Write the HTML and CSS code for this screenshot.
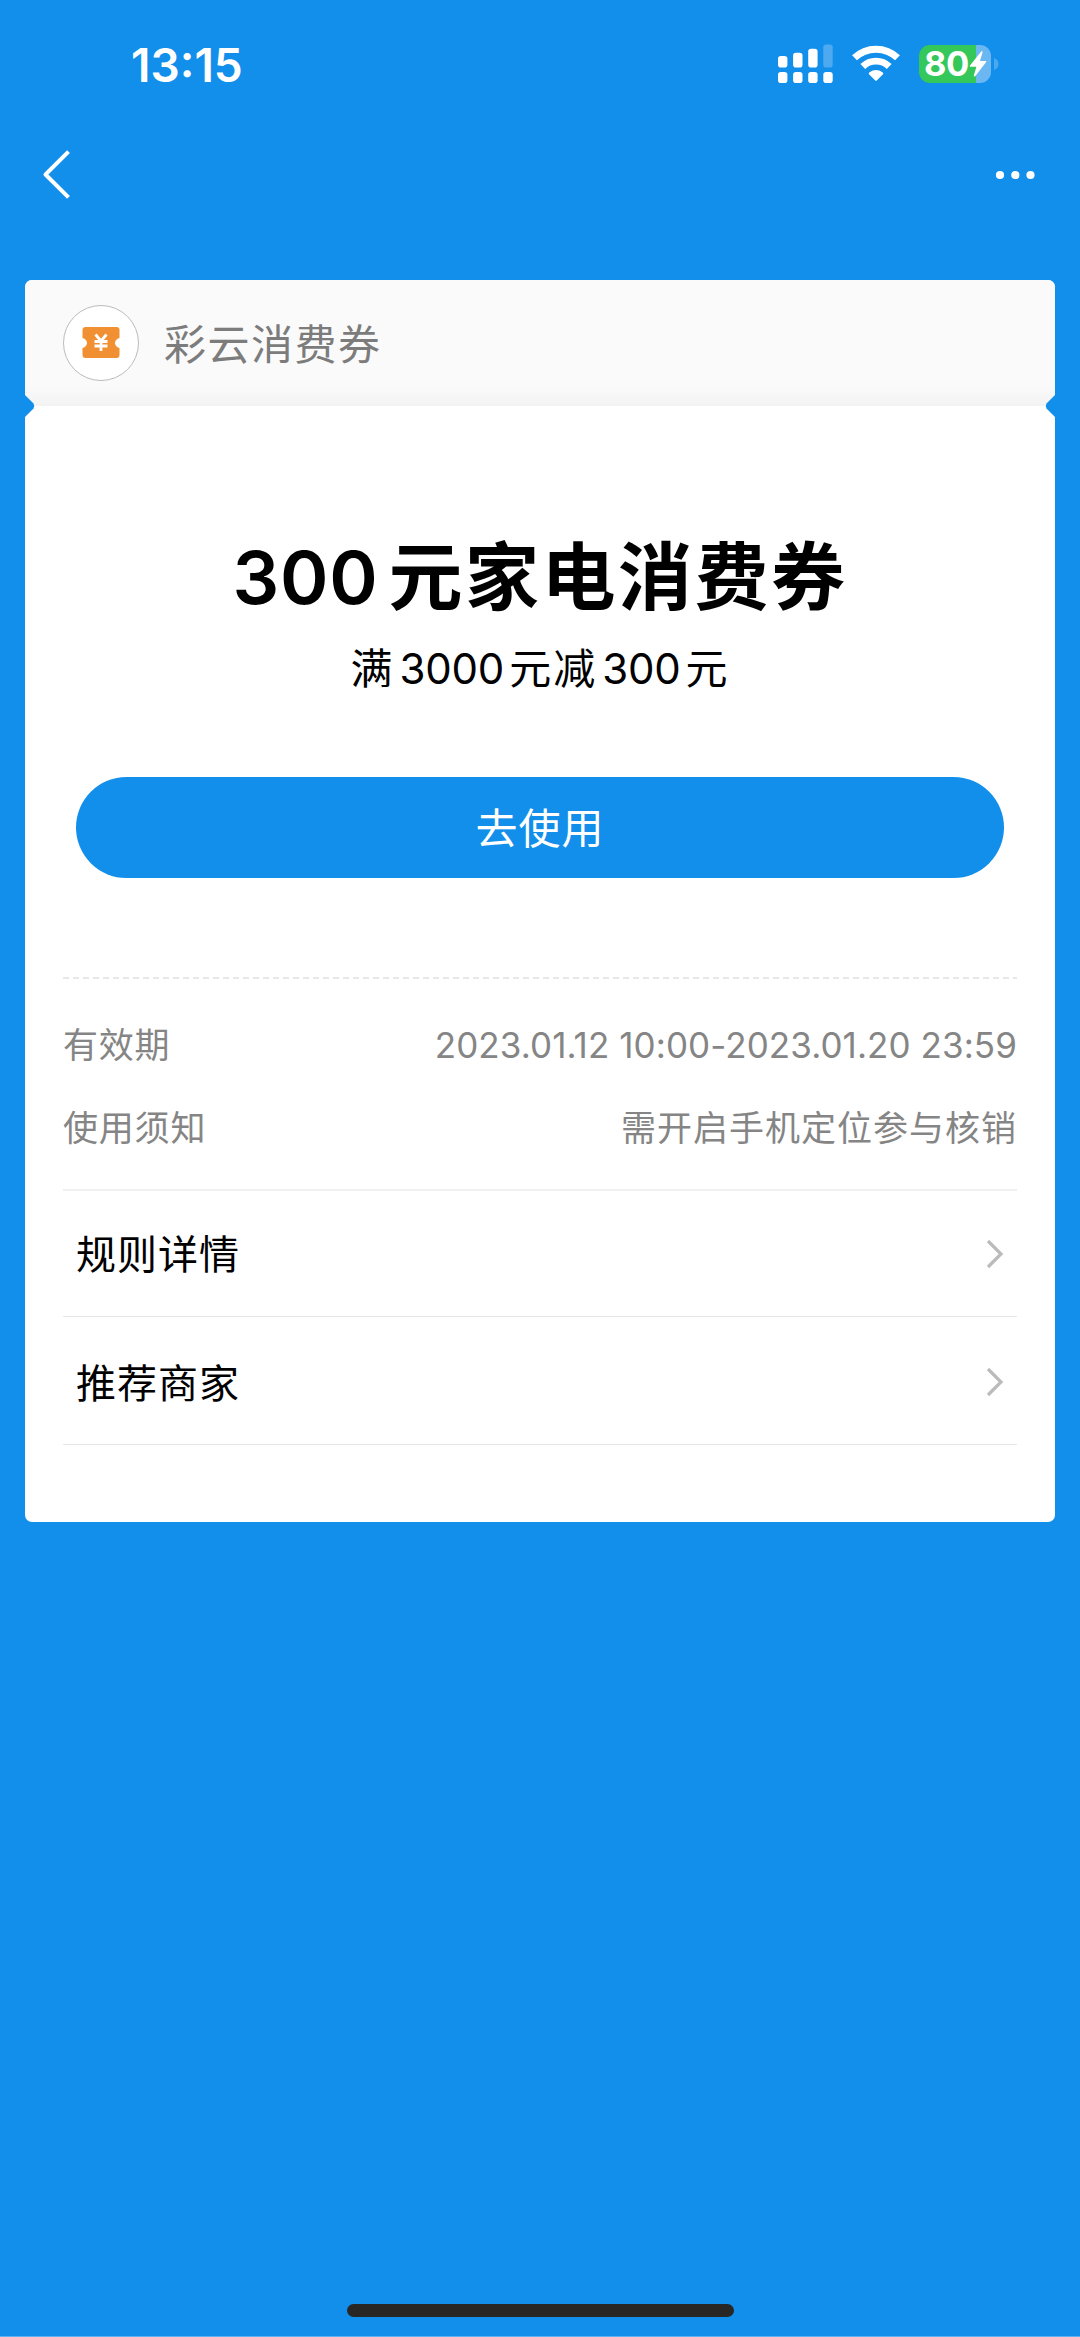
FILE: index.html
```html
<!DOCTYPE html>
<html lang="zh-CN">
<head>
<meta charset="utf-8">
<title>彩云消费券</title>
<link rel="stylesheet" href="styles.css">
</head>
<body>
<div class="screen">
  <header class="status">
    <span class="clock">13:15</span>
    <div class="indicators">
      <svg class="signal" width="56" height="40" viewBox="0 0 56 40" fill="#fff">
        <rect x="0" y="12" width="9.4" height="11.5" rx="2.8"/>
        <rect x="15.1" y="8.7" width="9.4" height="14.8" rx="2.8"/>
        <rect x="30.2" y="4.8" width="9.4" height="18.7" rx="2.8"/>
        <rect x="45.3" y="0.5" width="9.4" height="23" rx="2.8" opacity=".25"/>
        <rect x="0" y="28" width="9.4" height="11" rx="2.8"/>
        <rect x="15.1" y="28" width="9.4" height="11" rx="2.8"/>
        <rect x="30.2" y="28" width="9.4" height="11" rx="2.8"/>
        <rect x="45.3" y="28" width="9.4" height="11" rx="2.8"/>
      </svg>
      <svg class="wifi" width="50" height="40" viewBox="0 0 50 40">
        <g fill="none" stroke="#fff">
          <path d="M3.500 13.800A31 31 0 0 1 46.500 13.800" stroke-width="7"/>
          <path d="M11.800 22.500A18.700 18.700 0 0 1 38.200 22.500" stroke-width="6.800"/>
        </g>
        <path d="M24 36.300 18 30.200Q17 29 18.500 28.200Q25 23.800 31.500 28.200Q33 29 32 30.200L26 36.300Q25 37.300 24 36.300Z" fill="#fff"/>
      </svg>
      <div class="battery">
        <div class="battery-body">
          <span class="level">80</span>
          <svg class="bolt" width="18" height="26" viewBox="0 0 18 26"><path d="M12.2.5 1 14.6a.7.7 0 0 0 .6 1.2H7.400L4.800 24.600c-.2.9.8 1.300 1.400.6L17 11.300a.7.7 0 0 0-.6-1.200H11L13.600 1.200C13.800.3 12.800-.2 12.200.5Z" fill="#fff"/></svg>
        </div>
        <svg class="battery-cap" width="6" height="12" viewBox="0 0 6 12"><path d="M0 0C6 1.500 6 10.500 0 12Z" fill="#4ba8f0"/></svg>
      </div>
    </div>
  </header>
  <nav class="nav">
    <svg width="30" height="50" viewBox="0 0 30 50" fill="none" stroke="#fff" stroke-width="4" stroke-linejoin="round"><path d="M28.500 1.700 5.500 24.500 28.500 47.300"/></svg>
    <svg width="42" height="10" viewBox="0 0 42 10" fill="#fff"><circle cx="5" cy="5" r="4.100"/><circle cx="20.300" cy="5" r="4.100"/><circle cx="35.500" cy="5" r="4.100"/></svg>
  </nav>
  <main class="card">
    <div class="brand">
      <span class="badge">
        <svg width="38" height="32" viewBox="0 0 38 32"><path d="M3.500 0H34.500A3 3 0 0 1 37.500 3V11C31.500 12.500 31.500 19.500 37.500 21V28A3 3 0 0 1 34.500 31H3.500A3 3 0 0 1 .5 28V21C6.500 19.500 6.500 12.500 .5 11V3A3 3 0 0 1 3.500 0Z" fill="#f09032"/><path d="M13.500 7.500 19 14 24.500 7.500M19 14V24M12.500 14.500H25.500M12.500 19H25.500" fill="none" stroke="#fff" stroke-width="2.800"/></svg>
      </span>
      <span class="brand-name">彩云消费券</span>
      <svg class="notch notch-left" width="10" height="22" viewBox="0 0 10 22"><path d="M0 0 8.500 8.500Q10 11 8.500 13.500L0 22Z" fill="#128eeb"/></svg>
      <svg class="notch notch-right" width="10" height="22" viewBox="0 0 10 22"><path d="M10 0 1.500 8.500Q0 11 1.500 13.500L10 22Z" fill="#128eeb"/></svg>
    </div>
    <section class="offer">
      <h1 class="title"><span class="num">300</span>元家电消费券</h1>
      <p class="terms">满<span class="num">3000</span>元减<span class="num">300</span>元</p>
      <button class="use">去使用</button>
    </section>
    <section class="details">
      <svg class="dashes" width="954" height="2"><path d="M0 1H954" stroke="#e8e8e8" stroke-width="2" stroke-dasharray="6 4"/></svg>
      <div class="info"><span>有效期</span><span class="date">2023.01.12 10:00-2023.01.20 23:59</span></div>
      <div class="info"><span>使用须知</span><span class="notice">需开启手机定位参与核销</span></div>
      <div class="link first"><span>规则详情</span><svg class="chevron" width="18" height="30" viewBox="0 0 18 30"><path d="M2 2 15 15 2 28" fill="none" stroke="#bbb" stroke-width="3.200"/></svg></div>
      <div class="link last"><span>推荐商家</span><svg class="chevron" width="18" height="30" viewBox="0 0 18 30"><path d="M2 2 15 15 2 28" fill="none" stroke="#bbb" stroke-width="3.200"/></svg></div>
    </section>
  </main>
  <footer class="home"><span class="home-bar"></span></footer>
</div>
</body>
</html>
```
FILE: styles.css
```css
* { box-sizing: border-box; }
body { margin: 0; }
.screen {
  display: flex;
  flex-direction: column;
  width: 1080px;
  height: 2337px;
  background: #128eeb;
  border-bottom: 1px solid #5db3f2;
  font-family: Inter, "Noto Sans CJK SC", sans-serif;
  color: #000;
}
.status {
  display: flex;
  justify-content: space-between;
  height: 128px;
  padding: 44px 80px 0 131px;
  color: #fff;
}
.clock { height: 42px; font-size: 46px; line-height: 42px; font-weight: 600; }
.indicators { display: flex; }
.signal { margin-right: 17px; }
.wifi { margin-right: 18px; }
.battery { display: flex; align-items: center; gap: 3px; height: 39px; }
.battery-body {
  display: flex;
  align-items: center;
  width: 72px;
  height: 38px;
  padding-left: 5px;
  border-radius: 11px;
  background: linear-gradient(90deg, #34c759 57px, #6ab7f2 57px);
}
.level { width: 45px; font-size: 34.5px; line-height: 38px; font-weight: 700; letter-spacing: -0.5px; }
.nav {
  display: flex;
  align-items: center;
  justify-content: space-between;
  height: 93px;
  padding: 0 43px 0 40px;
}
.card {
  height: 1242px;
  margin: 59px 25px 0;
  border-radius: 7px;
  background: #fff;
}
.brand {
  position: relative;
  display: flex;
  align-items: center;
  gap: 25px;
  height: 126px;
  padding-left: 38px;
  border-radius: 7px 7px 0 0;
  background: linear-gradient(#fafafa 84%, #f3f3f3);
}
.badge {
  display: flex;
  align-items: center;
  justify-content: center;
  width: 76px;
  height: 76px;
  border: 1px solid #bbb;
  border-radius: 50%;
  background: #fff;
}
.brand-name { padding-top: 4px; font-size: 42px; line-height: 60px; letter-spacing: 1.5px; color: #7c7c7c; }
.notch { position: absolute; bottom: -11px; }
.notch-left { left: 0; }
.notch-right { right: 0; }
.offer {
  display: flex;
  flex-direction: column;
  align-items: center;
  height: 571px;
  padding-top: 121px;
}
.title { margin: 0; font-size: 74px; line-height: 100px; font-weight: 700; letter-spacing: 2.5px; }
.title .num { margin-right: 10px; font-size: 73.5px; font-weight: 600; letter-spacing: 0.8px; }
.terms { margin: 11px 0 0; font-size: 42px; line-height: 60px; letter-spacing: 2px; }
.terms .num { margin: 0 5px; letter-spacing: -0.2px; }
.use {
  width: 928px;
  height: 101px;
  margin-top: 78px;
  padding: 0 0 4px;
  border: 0;
  border-radius: 51px;
  background: #128eeb;
  color: #fff;
  font: 400 42px/97px "Noto Sans CJK SC", sans-serif;
  letter-spacing: 1px;
}
.details { display: flex; flex-direction: column; padding: 0 38px; }
.dashes { display: block; margin-bottom: 25px; }
.info {
  display: flex;
  justify-content: space-between;
  height: 83px;
  font-size: 35px;
  line-height: 83px;
  letter-spacing: 0.8px;
  color: #858585;
}
.date { letter-spacing: 0.08px; }
.notice { letter-spacing: 1px; }
.link {
  display: flex;
  align-items: center;
  justify-content: space-between;
  height: 128px;
  padding: 0 13px;
  border-bottom: 1px solid #e6e6e6;
  font-size: 40px;
  letter-spacing: 1px;
}
.link span { padding-bottom: 3px; }
.link.first { margin-top: 19px; border-top: 2px solid #f0f0f0; }
.link.last { padding-top: 3px; }
.home { display: flex; justify-content: center; margin-top: auto; padding-bottom: 19px; }
.home-bar { width: 387px; height: 13px; border-radius: 7px; background: #292725; }
```
